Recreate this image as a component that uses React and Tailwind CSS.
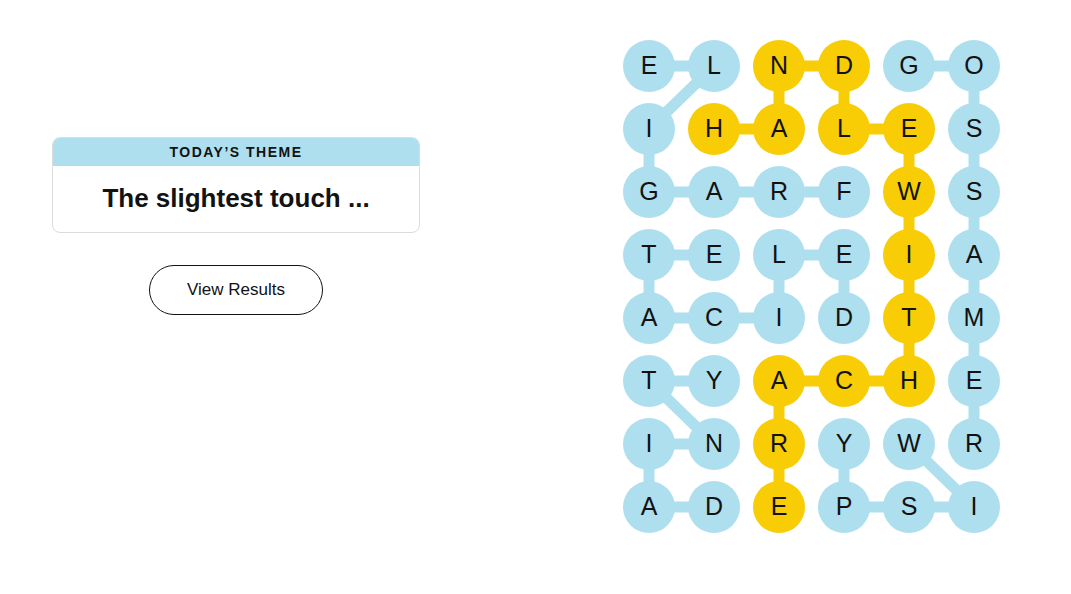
import React from "react";

const BLUE = "#aedfee";
const YELLOW = "#f8cd05";

const letters = [
  "ELNDGO",
  "IHALES",
  "GARFWS",
  "TELEIA",
  "ACIDTM",
  "TYACHE",
  "INRYWR",
  "ADEPSI",
];

// spangram cells, "row-col"
const spangram = new Set([
  "0-2", "0-3", "1-1", "1-2", "1-3", "1-4", "2-4", "3-4", "4-4",
  "5-2", "5-3", "5-4", "6-2", "7-2",
]);

// connectors between cells: [r1, c1, r2, c2, yellow?]
const links = [
  // FRAGILE
  [2, 3, 2, 2], [2, 2, 2, 1], [2, 1, 2, 0], [2, 0, 1, 0], [1, 0, 0, 1], [0, 1, 0, 0],
  // GOSSAMER
  [0, 4, 0, 5], [0, 5, 1, 5], [1, 5, 2, 5], [2, 5, 3, 5], [3, 5, 4, 5], [4, 5, 5, 5], [5, 5, 6, 5],
  // DELICATE
  [4, 3, 3, 3], [3, 3, 3, 2], [3, 2, 4, 2], [4, 2, 4, 1], [4, 1, 4, 0], [4, 0, 3, 0], [3, 0, 3, 1],
  // DAINTY
  [7, 1, 7, 0], [7, 0, 6, 0], [6, 0, 6, 1], [6, 1, 5, 0], [5, 0, 5, 1],
  // WISPY
  [6, 4, 7, 5], [7, 5, 7, 4], [7, 4, 7, 3], [7, 3, 6, 3],
  // HANDLE WITH CARE
  [1, 1, 1, 2, 1], [1, 2, 0, 2, 1], [0, 2, 0, 3, 1], [0, 3, 1, 3, 1], [1, 3, 1, 4, 1],
  [1, 4, 2, 4, 1], [2, 4, 3, 4, 1], [3, 4, 4, 4, 1], [4, 4, 5, 4, 1], [5, 4, 5, 3, 1],
  [5, 3, 5, 2, 1], [5, 2, 6, 2, 1], [6, 2, 7, 2, 1],
];

const cx = (c) => 26 + c * 65;
const cy = (r) => 26 + r * 63;

function Board() {
  return (
    <div className="relative">
      <svg
        className="absolute inset-0"
        width="377"
        height="493"
        viewBox="0 0 377 493"
      >
        {links.map(([r1, c1, r2, c2, y], i) => (
          <line
            key={i}
            x1={cx(c1)}
            y1={cy(r1)}
            x2={cx(c2)}
            y2={cy(r2)}
            stroke={y ? YELLOW : BLUE}
            strokeWidth="11"
          />
        ))}
      </svg>
      <div className="relative grid grid-cols-[repeat(6,52px)] gap-x-[13px] gap-y-[11px]">
        {letters.map((row, r) =>
          row.split("").map((ch, c) => (
            <div
              key={r + "-" + c}
              className={
                "w-[52px] h-[52px] rounded-full flex items-center justify-center text-[25px] text-[#121212] " +
                (spangram.has(r + "-" + c) ? "bg-[#f8cd05]" : "bg-[#aedfee]")
              }
            >
              {ch}
            </div>
          ))
        )}
      </div>
    </div>
  );
}

export default function App() {
  return (
    <div className="flex h-[594px] bg-white font-['Liberation_Sans',Arial,sans-serif] text-[#121212]">
      <div className="ml-[52px] pt-[137px] w-[368px] flex flex-col items-center">
        <div className="w-full rounded-[8px] border border-[#dcdcdc] overflow-hidden">
          <div className="h-[28px] bg-[#aedfee] flex items-center justify-center text-[14px] font-semibold tracking-[1.5px]">
            TODAY’S THEME
          </div>
          <div className="h-[66px] flex items-center justify-center text-[26px] font-bold pb-[2px]">
            The slightest touch ...
          </div>
        </div>
        <button className="mt-[32px] w-[174px] h-[50px] rounded-full border border-[#121212] text-[17px] bg-white">
          View Results
        </button>
      </div>
      <div className="ml-[203px] pt-[40px]">
        <Board />
      </div>
    </div>
  );
}
